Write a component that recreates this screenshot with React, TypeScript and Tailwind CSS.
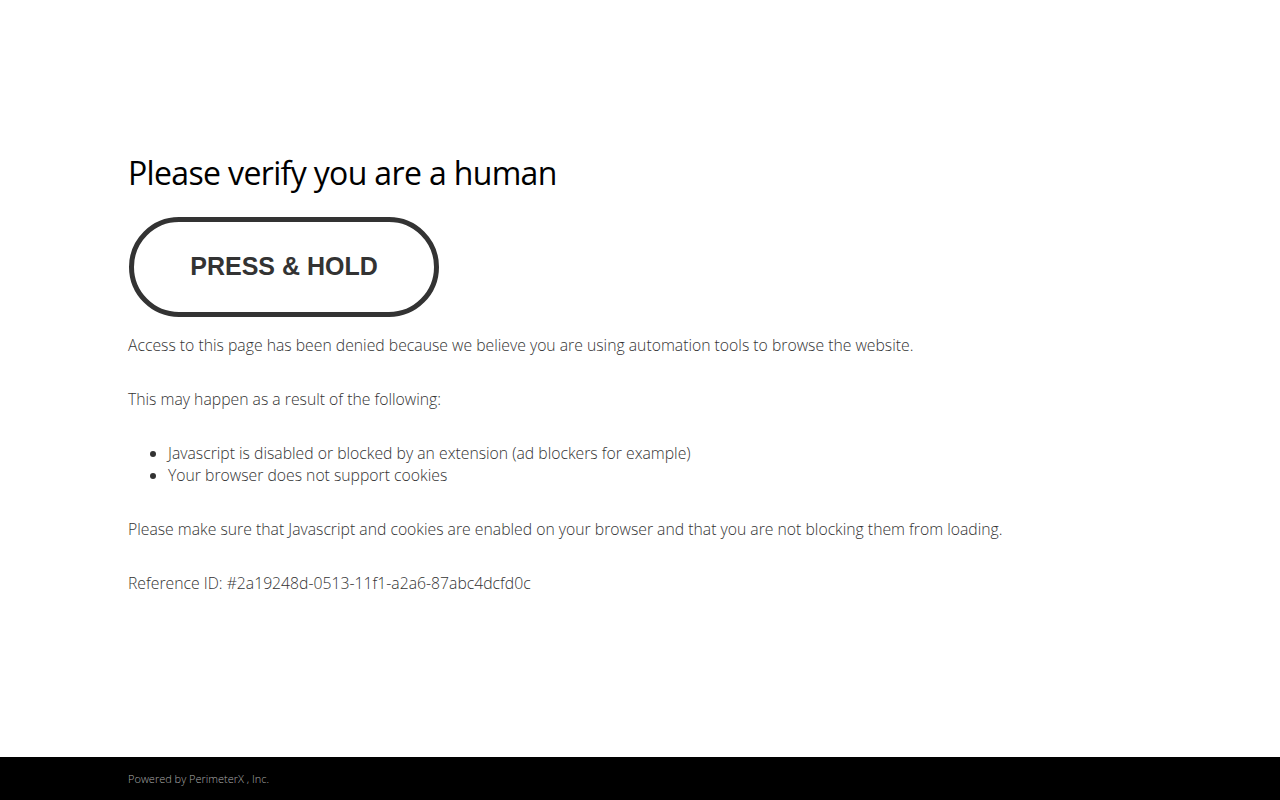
import React from 'react';

const body = "text-[15.75px] leading-[22px] text-[#333] font-light";

export default function App() {
  return (
    <div className="min-h-screen flex flex-col bg-white" style={{ fontFamily: '"Open Sans", sans-serif' }}>
      <main className="flex-1 pl-[128px] pt-[154px]">
        <h1 className="text-[32px] leading-[38px] text-black font-normal tracking-[-0.65px]">
          Please verify you are a human
        </h1>
        <button
          className="ml-px mt-[25px] w-[310px] h-[100px] rounded-full border-[5px] border-[#333] bg-white text-[#333] text-[25px] font-bold"
          style={{ fontFamily: '"Liberation Sans", Arial, sans-serif' }}
        >
          PRESS &amp; HOLD
        </button>
        <div className={`mt-[17px] flex flex-col gap-[32px] ${body}`}>
          <p>Access to this page has been denied because we believe you are using automation tools to browse the website.</p>
          <p>This may happen as a result of the following:</p>
          <ul className="list-disc pl-[40px]">
            <li>Javascript is disabled or blocked by an extension (ad blockers for example)</li>
            <li>Your browser does not support cookies</li>
          </ul>
          <p>Please make sure that Javascript and cookies are enabled on your browser and that you are not blocking them from loading.</p>
          <p>Reference ID: #2a19248d-0513-11f1-a2a6-87abc4dcfd0c</p>
        </div>
      </main>
      <footer className="h-[43px] bg-black flex items-center pl-[128px] pt-[2px]">
        <span className="text-[11px] text-[#aaa] font-light">Powered by PerimeterX , Inc.</span>
      </footer>
    </div>
  );
}
